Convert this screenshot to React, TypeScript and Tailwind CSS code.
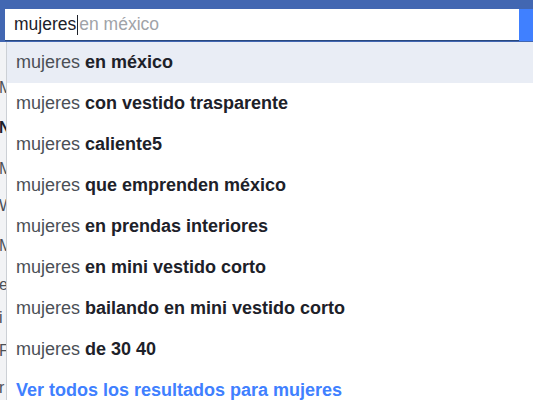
import React from "react";

const rows: { bold: string; active?: boolean }[] = [
  { bold: "en méxico", active: true },
  { bold: "con vestido trasparente" },
  { bold: "caliente5" },
  { bold: "que emprenden méxico" },
  { bold: "en prendas interiores" },
  { bold: "en mini vestido corto" },
  { bold: "bailando en mini vestido corto" },
  { bold: "de 30 40" },
];

const bgLetters: { ch: string; h: number; bold?: boolean }[] = [
  { ch: "", h: 28 },
  { ch: "M", h: 36 },
  { ch: "N", h: 44, bold: true },
  { ch: "M", h: 38 },
  { ch: "W", h: 36 },
  { ch: "M", h: 44 },
  { ch: "e", h: 34 },
  { ch: "i", h: 32 },
  { ch: "F", h: 34 },
  { ch: "r", h: 40 },
];

export default function App() {
  return (
    <div
      className="relative w-[533px] h-[400px] overflow-hidden bg-white"
      style={{ fontFamily: '"Liberation Sans", Arial, sans-serif' }}
    >
      {/* header */}
      <div className="h-[42px] bg-[#4267b2] pt-[9px] pl-[5px] flex">
        <div className="h-[32px] flex-1 bg-white flex items-center pl-[9px] border-b border-[#29487d]">
          <span className="text-[17.5px] text-[#1d2129] leading-none">mujeres</span>
          <span className="w-px h-[20px] bg-[#1d2129] ml-px" />
          <span className="text-[17.5px] text-[#a0a3a8] leading-none ml-px">en méxico</span>
        </div>
        <div className="w-[14px] h-[32px] bg-[#4080ff]" />
      </div>

      {/* background page strip */}
      <div className="w-[6px] h-[358px] bg-[#f2f3f5] overflow-hidden flex flex-col text-[16px] text-[#4b4f56] leading-none">
        {bgLetters.map((l, i) => (
          <div
            key={i}
            className={`shrink-0 flex items-center ${l.bold ? "font-bold text-[#1d2129]" : ""}`}
            style={{ height: l.h }}
          >
            <span className="-ml-[1px]">{l.ch}</span>
          </div>
        ))}
      </div>

      {/* dropdown */}
      <div className="absolute left-[6px] top-[42px] right-0 bg-white border-l border-[#ccd0d5] flex flex-col">
        {rows.map((r, i) => (
          <div
            key={i}
            className={`h-[41px] shrink-0 flex items-center pl-[9px] text-[18px] ${r.active ? "bg-[#e9edf5]" : ""}`}
          >
            <span className="text-[#4b4f56]">mujeres&nbsp;</span>
            <span className="font-bold text-[#1d2129]">{r.bold}</span>
          </div>
        ))}
        <div className="h-[41px] shrink-0 flex items-center pl-[9px] text-[18px] font-bold text-[#4080ff]">
          Ver todos los resultados para mujeres
        </div>
      </div>
    </div>
  );
}
